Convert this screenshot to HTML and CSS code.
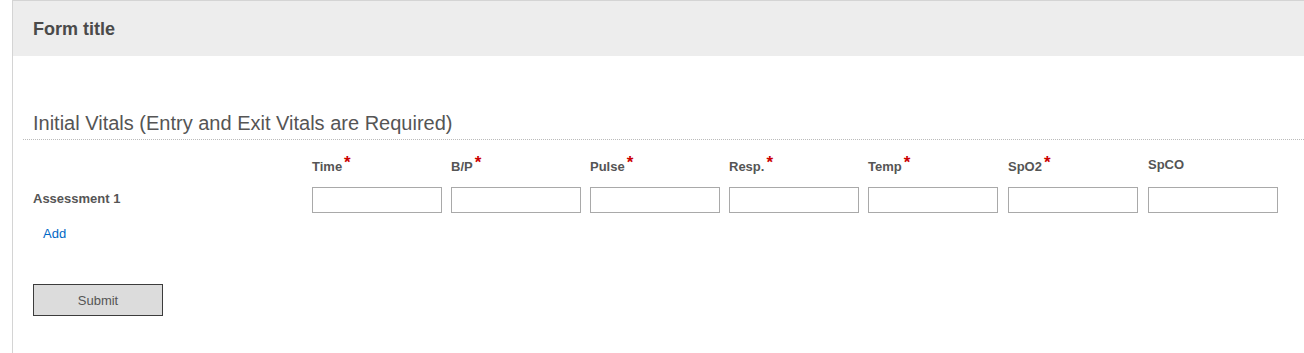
FILE: index.html
```html
<!DOCTYPE html>
<html lang="en">
<head>
    <meta charset="UTF-8">
    <title>Form title</title>
    <link rel="stylesheet" href="styles.css">
</head>
<body>

<div class="form-wrap">
    <div class="form-header">
        <h1>Form title</h1>
    </div>

    <div class="form-body">
        <h2 class="section-title">Initial Vitals (Entry and Exit Vitals are Required)</h2>

        <div class="vitals">
            <div class="cell"></div>
            <div class="cell col-label"><span>Time<span class="req">*</span></span></div>
            <div class="cell col-label"><span>B/P<span class="req">*</span></span></div>
            <div class="cell col-label"><span>Pulse<span class="req">*</span></span></div>
            <div class="cell col-label"><span>Resp.<span class="req">*</span></span></div>
            <div class="cell col-label"><span>Temp<span class="req">*</span></span></div>
            <div class="cell col-label"><span>SpO2<span class="req">*</span></span></div>
            <div class="cell col-label plain"><span>SpCO</span></div>

            <div class="cell row-label">Assessment 1</div>
            <div class="cell"><input type="text"></div>
            <div class="cell"><input type="text"></div>
            <div class="cell"><input type="text"></div>
            <div class="cell"><input type="text"></div>
            <div class="cell"><input type="text"></div>
            <div class="cell"><input type="text"></div>
            <div class="cell"><input type="text"></div>
        </div>

        <a class="add-link" href="#">Add</a>

        <div class="actions">
            <button type="button" class="submit-btn">Submit</button>
        </div>
    </div>
</div>

</body>
</html>
```

FILE: styles.css
```css
body, html {
    margin: 0;
    overflow: hidden;
}
body {
    font-family: "Liberation Sans", Arial, sans-serif;
    color: #555;
    background: #fff;
}
.form-wrap {
    margin-left: 12px;
    border-left: 1px solid #d4d4d4;
    border-top: 1px solid #d4d4d4;
    height: 352px;
}
.form-header {
    background: #ededed;
    height: 55px;
    padding-left: 20px;
    display: flex;
    align-items: center;
}
.form-header h1 {
    margin: 0;
    font-size: 18px;
    font-weight: bold;
    color: #4a4a4a;
    position: relative;
    top: 1px;
}
.form-body {
    padding: 0 0 0 10px;
}
.section-title {
    margin: 55px 0 0 0;
    padding: 0 0 4px 10px;
    font-size: 20px;
    font-weight: normal;
    color: #555;
    line-height: 24px;
    border-bottom: 1px dotted #bbb;
}
.vitals {
    display: grid;
    grid-template-columns: 279px 139px 139px 139px 139px 140px 140px 140px;
    grid-template-rows: 39px 26px;
    padding-left: 10px;
    margin-top: 8px;
}
.cell {
    display: flex;
    align-items: center;
}
.col-label {
    align-items: flex-end;
    font-size: 13px;
    line-height: 15px;
    font-weight: bold;
    color: #555;
    padding-bottom: 13px;
    box-sizing: border-box;
}
.col-label.plain {
    padding-bottom: 15px;
}
.req {
    color: #c00;
    font-size: 17px;
    line-height: 0;
    margin-left: 2px;
    position: relative;
    top: -3px;
}
.row-label {
    font-size: 13px;
    font-weight: bold;
    color: #555;
    padding-bottom: 3px;
}
.cell input {
    width: 130px;
    height: 26px;
    box-sizing: border-box;
    border: 1px solid #a9a9a9;
    padding: 2px 4px;
    margin: 0;
    font-family: inherit;
}
.add-link {
    display: inline-block;
    margin: 13px 0 0 20px;
    font-size: 13px;
    line-height: 15px;
    color: #0067c5;
    text-decoration: none;
}
.actions {
    margin-top: 42px;
    padding-left: 10px;
}
.submit-btn {
    width: 130px;
    height: 32px;
    background: #dcdcdc;
    border: 1px solid #3c3c3c;
    font-family: inherit;
    font-size: 13px;
    color: #555;
    cursor: pointer;
}
```
